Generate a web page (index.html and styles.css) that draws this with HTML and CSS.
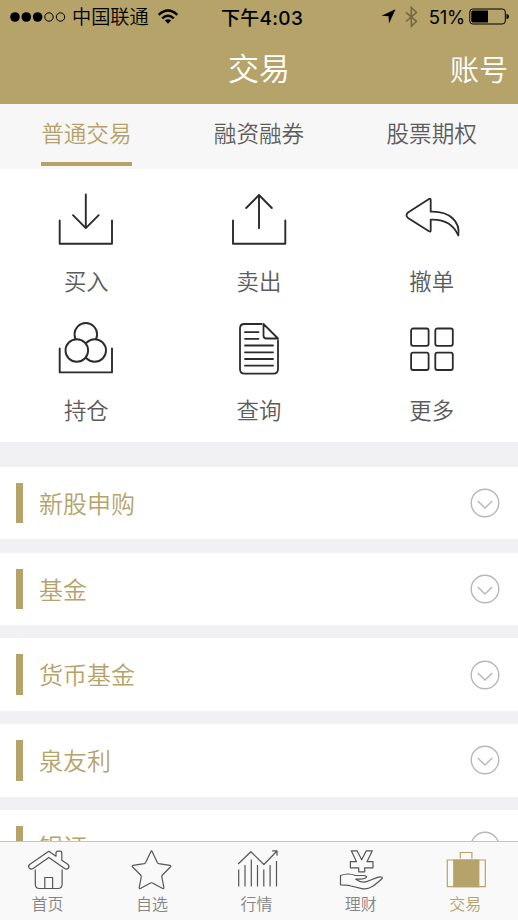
FILE: index.html
```html
<!DOCTYPE html>
<html lang="zh-CN">
<head>
<meta charset="utf-8">
<title>交易</title>
<link rel="stylesheet" href="styles.css">
</head>
<body>
<div class="app">
  <header class="header">
    <div class="status">
      <div class="carrier">
        <svg class="signal" width="56" height="12" viewBox="0 0 56 12"><circle cx="5" cy="6" r="4.8"/><circle cx="16.3" cy="6" r="4.8"/><circle cx="27.6" cy="6" r="4.8"/><g fill="none" stroke="#000"><circle cx="39" cy="6" r="4.2"/><circle cx="50.5" cy="6" r="4.2"/></g></svg>
        <span class="carrier-name">中国联通</span>
        <svg class="wifi" width="22" height="16" viewBox="0 0 22 16"><g fill="none" stroke="#000" stroke-width="2.4"><path d="M1.7 5.8Q11-2.6 20.3 5.8"/><path d="M5.2 9.4Q11 4.2 16.8 9.4"/></g><path d="M7.8 11.6Q11 8.9 14.2 11.6L11 14.8Z"/></svg>
      </div>
      <span class="time">下午4:03</span>
      <div class="indicators">
        <svg width="15" height="15" viewBox="0 0 15 15"><path d="M.5 6.8L14.5.3L8 14.4L7.6 7.2Z"/></svg>
        <svg class="bluetooth" width="13" height="22" viewBox="0 0 13 22"><path d="M1 6.3L11.5 15.3L6.3 20.2V1.4L11.5 6.4L1 15.5" fill="none" stroke="#776a42" stroke-width="1.6"/></svg>
        <span class="percent">51%</span>
        <svg width="41" height="17" viewBox="0 0 41 17"><rect x=".8" y="1" width="35.5" height="15" rx="3" fill="none" stroke="#000"/><path d="M4 2.6H19V14.4H4Q2.3 14.4 2.3 12.7V4.3Q2.3 2.6 4 2.6ZM37.5 5.8Q40 6.4 40 8.5T37.5 11.2Z"/></svg>
      </div>
    </div>
    <div class="titlebar"><h1>交易</h1><a class="account">账号</a></div>
  </header>

  <nav class="tabs">
    <a class="tab active"><span>普通交易</span></a>
    <a class="tab"><span>融资融券</span></a>
    <a class="tab"><span>股票期权</span></a>
  </nav>

  <section class="actions">
    <a class="action"><svg viewBox="0 0 60 60"><path d="M3.7 29.5V52.7H56V29.5M29.8 3.5V37M17 24.2L29.8 37.2L42.7 24.2"/></svg><span>买入</span></a>
    <a class="action"><svg viewBox="0 0 60 60"><path d="M4 29.5V52.7H56.3V29.5M30 37.2V4M17.2 17L30 4L42.8 17"/></svg><span>卖出</span></a>
    <a class="action"><svg class="thin" viewBox="0 0 60 60"><path d="M28.7 8.9Q28.7 7 27 8L6 21.5Q3 24.2 6 26.9L27 40.3Q28.7 41.3 28.7 39.5V28.7C40.5 28.2 50.8 31.8 56.3 44.5C58.5 31 48 20 28.7 20.7Z"/></svg><span>撤单</span></a>
    <a class="action"><svg viewBox="0 0 60 60"><path d="M3.7 28.5V52.4H56V28.5"/><g fill="#fff"><circle cx="29.8" cy="14.3" r="11.3"/><circle cx="38.7" cy="30.5" r="11.3"/><circle cx="20.8" cy="30.5" r="11.3"/></g></svg><span>持仓</span></a>
    <a class="action"><svg class="thin" viewBox="0 0 60 60"><path d="M32.5 4H15.5Q11 4 11 8.5V49Q11 53.7 15.5 53.7H44.5Q49 53.7 49 49V20.5M34.5 4V15.5Q34.5 18.5 37.5 18.5H49L34.5 4M16 12.2H29.5M16 18.8H29.5M16 25.5H44M16 32.3H44M16 39H44M16 45.7H44"/></svg><span>查询</span></a>
    <a class="action"><svg class="thin" viewBox="0 0 60 60"><g><rect x="9.1" y="8.5" width="17.5" height="17.3" rx="2"/><rect x="33.3" y="8.5" width="17.5" height="17.3" rx="2"/><rect x="9.1" y="32.7" width="17.5" height="17.3" rx="2"/><rect x="33.3" y="32.7" width="17.5" height="17.3" rx="2"/></g></svg><span>更多</span></a>
  </section>

  <main class="groups">
    <div class="group"><h2>新股申购</h2><svg viewBox="0 0 30 30"><circle cx="15" cy="15" r="13.8"/><path d="M7.8 12.9L15 20L22.2 12.9"/></svg></div>
    <div class="group"><h2>基金</h2><svg viewBox="0 0 30 30"><circle cx="15" cy="15" r="13.8"/><path d="M7.8 12.9L15 20L22.2 12.9"/></svg></div>
    <div class="group"><h2>货币基金</h2><svg viewBox="0 0 30 30"><circle cx="15" cy="15" r="13.8"/><path d="M7.8 12.9L15 20L22.2 12.9"/></svg></div>
    <div class="group"><h2>泉友利</h2><svg viewBox="0 0 30 30"><circle cx="15" cy="15" r="13.8"/><path d="M7.8 12.9L15 20L22.2 12.9"/></svg></div>
    <div class="group"><h2>银证</h2><svg viewBox="0 0 30 30"><circle cx="15" cy="15" r="13.8"/><path d="M7.8 12.9L15 20L22.2 12.9"/></svg></div>
  </main>

  <footer class="footer">
    <nav class="bottom-nav">
      <a><svg viewBox="-1.3 0 44 44"><path d="M8 22.5V37.2Q8 41.5 12.3 41.5H30.5Q34.8 41.5 34.8 37.2V22.5M17.5 41V30.5H25.3V41M2.3 17.5L21.5 4.3L28.7 9.2V6.2Q28.7 4.2 30.7 4.2H32.8Q34.5 4.2 34.5 6.2V13.2L40.8 17.5Q42.5 19.4 41 21.3Q39.3 22.8 37.3 21.6L21.5 10.4L5.8 21.6Q3.8 22.8 2 21.2Q.5 19.3 2.3 17.5Z"/></svg><span>首页</span></a>
      <a><svg viewBox="0 0 44 44"><path d="M20.8 4.7Q21.5 3.2 22.2 4.7L27.3 15.5Q27.8 16.4 28.8 16.6L39.8 18.3Q41.6 18.7 40.4 20L32.4 28Q31.6 28.8 31.8 30L33.8 40.2Q34 42.2 32.2 41.3L22.5 36Q21.5 35.5 20.5 36L10.8 41.3Q9 42.2 9.3 40.2L11.2 30Q11.4 28.8 10.6 28L2.6 20Q1.4 18.7 3.2 18.3L14.2 16.6Q15.2 16.4 15.7 15.5Z"/></svg><span>自选</span></a>
      <a><svg viewBox="-1.5 0 44 44"><path d="M2.6 17L15.4 4.7L28.4 17.5L41 4.5M36.7 3.8H41.5V8.7M3.2 22.5V39.5M9.5 18V39.5M15.8 12.5V39.5M22 18V39.5M28.3 22.5V39.5M34.6 18V39.5M41 14V39.5"/></svg><span>行情</span></a>
      <a><svg viewBox="0 0 44 44"><path d="M12.3 3.8H18L22.7 12.8L27.3 3.8H33.3L28 14.7H34V20.8H25.7V24.8H19.7V20.8H11.4V14.7H17.5ZM1.5 28.5C8 26 12.5 26.8 16.5 28.5H23.7Q28.2 28.7 27.4 30.3Q26.7 32.2 16.8 32.2Q23.7 37.2 30.5 33.5L38.5 30.4Q44 29 43.2 31.5C37.4 36.8 31.3 42.8 24 41.8L12 39Q9.5 38.2 7.5 38.2L1.5 37.8Z"/></svg><span>理财</span></a>
      <a class="current"><svg viewBox="-2 0 44 44"><path d="M15.3 11.5V5.5H26.9V11.5M2.3 13H40.3V39.7H2.3Z"/><path class="fill" d="M8.8 13H33.8V39.7H8.8Z"/></svg><span>交易</span></a>
    </nav>
  </footer>
</div>
</body>
</html>
```
FILE: styles.css
```css
* { box-sizing: border-box; }
body { margin: 0; }
h1, h2 { margin: 0; font-weight: inherit; }
svg { display: block; flex: none; }

.app {
  width: 518px;
  height: 920px;
  display: flex;
  flex-direction: column;
  overflow: hidden;
  background: #f1f1f3;
  color: #5c5c5c;
  font-family: "Liberation Sans", "Noto Sans CJK SC DemiLight", "Noto Sans CJK SC", sans-serif;
  font-weight: 350;
}

.header { flex: none; height: 103.5px; background: #b5a36a; }
.status {
  height: 33px;
  padding: 0 8px 0 10px;
  display: grid;
  grid-template-columns: 1fr auto 1fr;
  align-items: center;
  color: #000;
}
.carrier, .indicators { display: flex; align-items: center; }
.carrier-name { margin-left: 6px; padding-top: 2px; font-size: 19.2px; font-weight: 400; line-height: 31px; }
.wifi { margin-left: 8px; }
.time {
  padding-left: 4px;
  font-family: Inter, "Noto Sans CJK SC", sans-serif;
  font-size: 19px;
  font-weight: 500;
  letter-spacing: 0.3px;
}
.indicators { justify-content: flex-end; }
.bluetooth { margin-left: 9px; }
.percent {
  margin: 0 4px 0 11px;
  font-family: Inter, sans-serif;
  font-size: 18.5px;
  font-weight: 400;
  letter-spacing: -0.2px;
}
.titlebar {
  height: 70px;
  padding: 0 10px 0 0;
  display: grid;
  grid-template-columns: 1fr auto 1fr;
  align-items: center;
  color: #fff;
}
.titlebar h1 { grid-column: 2; margin-left: 10px; padding-top: 3px; font-size: 31px; line-height: 67px; }
.account { justify-self: end; font-size: 29px; }

.tabs {
  flex: none;
  height: 65px;
  display: grid;
  grid-template-columns: repeat(3, 1fr);
  justify-items: center;
  background: #f7f7f7;
}
.tab { height: 62.5px; font-size: 22.6px; line-height: 61px; }
.active { color: #b5a36a; border-bottom: 4px solid #b5a36a; }

.actions {
  flex: none;
  height: 273.5px;
  padding-top: 22.5px;
  display: grid;
  grid-template-columns: repeat(3, 1fr);
  grid-template-rows: 129px 122px;
  background: #fff;
}
.action { display: flex; flex-direction: column; align-items: center; font-size: 22.4px; }
.action svg {
  width: 60px;
  height: 60px;
  fill: none;
  stroke: #2b2b2b;
  stroke-width: 1.9;
  stroke-linejoin: round;
  stroke-linecap: round;
}
.action svg.thin { stroke-width: 1.8; }
.action span { margin-top: 15px; line-height: 34px; }

.groups {
  flex: 1;
  min-height: 0;
  padding-top: 24.8px;
  display: flex;
  flex-direction: column;
  gap: 13.3px;
  overflow: hidden;
}
.group {
  flex: none;
  height: 72.5px;
  padding: 0 18px 0 16px;
  display: flex;
  align-items: center;
  justify-content: space-between;
  background: #fff;
  color: #b5a36a;
}
.group h2 {
  height: 40.4px;
  padding-left: 16px;
  border-left: 7px solid #b5a36a;
  font-size: 24px;
  line-height: 43px;
}
.group svg { width: 30px; height: 30px; fill: none; stroke: #b7b7b7; stroke-width: 1.4; }

.footer { flex: none; height: 79px; border-top: 1px solid #c5c5c5; background: #f9f9f9; overflow: hidden; }
.bottom-nav {
  width: 522px;
  height: 78px;
  margin-left: -4.6px;
  padding-top: 5px;
  display: grid;
  grid-template-columns: repeat(5, 1fr);
}
.bottom-nav a {
  display: flex;
  flex-direction: column;
  align-items: center;
  color: #858585;
  font-size: 16px;
  line-height: 24px;
}
.bottom-nav span { margin-top: 2px; }
.bottom-nav svg { width: 44px; height: 44px; fill: none; stroke: #555; stroke-width: 1.2; stroke-linejoin: round; overflow: visible; }
.bottom-nav .current { color: #b5a36a; }
.bottom-nav .current svg { stroke: #b5a36a; stroke-linejoin: miter; }
.bottom-nav .fill { fill: #b5a36a; }
```
